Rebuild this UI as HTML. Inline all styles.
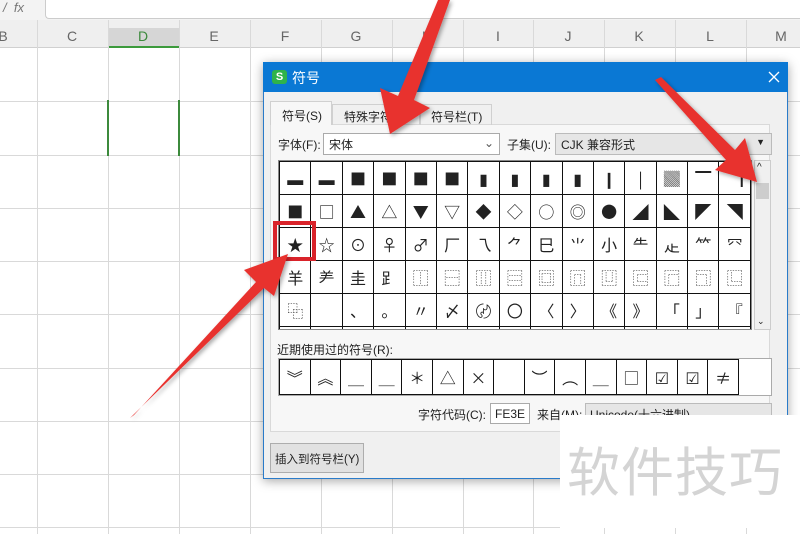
<!DOCTYPE html>
<html><head><meta charset="utf-8"><style>
*{margin:0;padding:0;box-sizing:border-box}
body{width:800px;height:534px;overflow:hidden;background:#fff;position:relative;font-family:"Liberation Sans","Noto Sans CJK SC",sans-serif;font-size:12px;color:#222}
.a{position:absolute}
.vl{position:absolute;top:20px;bottom:0;width:1px;background:#d9d9d9}
.hl{position:absolute;left:0;right:0;height:1px;background:#d9d9d9}
.ch{position:absolute;top:28px;width:20px;text-align:center;font-size:14px;color:#666}
.grid{position:absolute;left:278px;top:160px;width:474px;height:170px;overflow:hidden;background:#fff;border:1px solid #888}
.grid table,.rec table{border-collapse:collapse}
.grid td{width:31.6px;height:33px;border:1.5px solid #111;text-align:center;font-size:16px;font-family:"Noto Sans CJK SC",sans-serif;line-height:1;padding:0}
.rec td{width:30.6px;height:35px;border:1.5px solid #111;text-align:center;font-size:16px;font-family:"Noto Sans CJK SC",sans-serif;padding:0}
</style></head><body>
<div class="a" style="left:0;top:0;width:800px;height:20px;background:#f3f3f3"></div>
<div class="a" style="left:45px;top:0;width:755px;height:19px;background:#fff;border-bottom:1px solid #ccc;border-left:1px solid #ccc;border-radius:0 0 0 4px"></div>
<div class="a" style="left:3px;top:0;font-size:13px;color:#777;font-style:italic">/ &nbsp;fx</div>
<div class="a" style="left:0;top:20px;width:800px;height:28px;background:#efefef;border-bottom:1px solid #d0d0d0"></div>
<div class="a" style="left:108px;top:28px;width:71px;height:20px;background:#d6d6d6;border-bottom:2px solid #3c9a3c"></div>
<div class="ch" style="left:-7px">B</div><div class="ch" style="left:62px">C</div><div class="ch" style="left:133px;color:#3c8a3c">D</div><div class="ch" style="left:204px">E</div><div class="ch" style="left:275px">F</div><div class="ch" style="left:346px">G</div><div class="ch" style="left:417px">H</div><div class="ch" style="left:488px">I</div><div class="ch" style="left:558px">J</div><div class="ch" style="left:629px">K</div><div class="ch" style="left:700px">L</div><div class="ch" style="left:771px">M</div>
<div class="vl" style="left:37px"></div><div class="vl" style="left:108px"></div><div class="vl" style="left:179px"></div><div class="vl" style="left:250px"></div><div class="vl" style="left:321px"></div><div class="vl" style="left:392px"></div><div class="vl" style="left:463px"></div><div class="vl" style="left:533px"></div><div class="vl" style="left:604px"></div><div class="vl" style="left:675px"></div><div class="vl" style="left:746px"></div>
<div class="hl" style="top:101px"></div><div class="hl" style="top:155px"></div><div class="hl" style="top:208px"></div><div class="hl" style="top:261px"></div><div class="hl" style="top:314px"></div><div class="hl" style="top:368px"></div><div class="hl" style="top:421px"></div><div class="hl" style="top:474px"></div><div class="hl" style="top:527px"></div>
<div class="a" style="left:107px;top:100px;width:2px;height:56px;background:#3c8a3c"></div>
<div class="a" style="left:178px;top:100px;width:2px;height:56px;background:#3c8a3c"></div>

<div class="a" style="left:263px;top:62px;width:525px;height:417px;background:#f0f0f0;border:1px solid #2a7bc9;box-shadow:0 2px 10px rgba(0,0,0,.35)"></div>
<div class="a" style="left:263px;top:62px;width:525px;height:30px;background:#0a78d4"></div>
<div class="a" style="left:272px;top:70px;width:15px;height:14px;background:#2fb34a;border-radius:3px;color:#fff;font-size:11px;font-weight:bold;text-align:center;line-height:14px">S</div>
<div class="a" style="left:292px;top:68px;color:#fff;font-size:14px">符号</div>
<svg class="a" style="left:768px;top:71px" width="12" height="12"><path d="M1 1L11 11M11 1L1 11" stroke="#fff" stroke-width="1.3"/></svg>
<div class="a" style="left:270px;top:124px;width:500px;height:308px;border:1px solid #d9d9d9;background:#f7f7f7"></div>
<div class="a" style="left:270px;top:101px;width:62px;height:24px;background:#f7f7f7;border:1px solid #d0d0d0;border-bottom:none;padding:5px 0 0 11px">符号(S)</div>
<div class="a" style="left:332px;top:104px;width:88px;height:21px;border:1px solid #d0d0d0;border-bottom:none;padding:3px 0 0 11px">特殊字符(P)</div>
<div class="a" style="left:420px;top:104px;width:72px;height:21px;border:1px solid #d0d0d0;border-bottom:none;padding:3px 0 0 10px">符号栏(T)</div>
<div class="a" style="left:278px;top:136px">字体(F):</div>
<div class="a" style="left:323px;top:133px;width:177px;height:22px;background:#fff;border:1px solid #aaa;padding:2px 0 0 5px">宋体<span style="position:absolute;right:5px;top:2px;color:#555">⌄</span></div>
<div class="a" style="left:507px;top:136px">子集(U):</div>
<div class="a" style="left:555px;top:133px;width:217px;height:22px;background:#e6e6e6;border:1px solid #bbb;padding:2px 0 0 5px">CJK 兼容形式<span style="position:absolute;right:6px;top:3px;font-size:9px">▼</span></div>
<div class="grid"><table>
<tr><td>▬</td><td>▬</td><td>■</td><td>■</td><td>■</td><td>■</td><td>▮</td><td>▮</td><td>▮</td><td>▮</td><td>❙</td><td>|</td><td>▓</td><td>▔</td><td>▕</td></tr>
<tr><td>■</td><td>□</td><td>▲</td><td>△</td><td>▼</td><td>▽</td><td>◆</td><td>◇</td><td>○</td><td>◎</td><td>●</td><td>◢</td><td>◣</td><td>◤</td><td>◥</td></tr>
<tr><td>★</td><td>☆</td><td>⊙</td><td>♀</td><td>♂</td><td>厂</td><td>乁</td><td>⺈</td><td>巳</td><td>⺌</td><td>小</td><td>⺧</td><td>龰</td><td>⺮</td><td>⺳</td></tr>
<tr><td>羊</td><td>⺶</td><td>圭</td><td>⻊</td><td>⿰</td><td>⿱</td><td>⿲</td><td>⿳</td><td>⿴</td><td>⿵</td><td>⿶</td><td>⿷</td><td>⿸</td><td>⿹</td><td>⿺</td></tr>
<tr><td>⿻</td><td></td><td>、</td><td>。</td><td>〃</td><td>〆</td><td>〄</td><td>〇</td><td>〈</td><td>〉</td><td>《</td><td>》</td><td>「</td><td>」</td><td>『</td></tr>
<tr><td></td><td></td><td></td><td></td><td></td><td></td><td></td><td></td><td></td><td></td><td></td><td></td><td></td><td></td><td></td></tr>
</table></div>
<div class="a" style="left:754px;top:160px;width:17px;height:170px;background:#f0f0f0;border:1px solid #ccc"></div>
<div class="a" style="left:757px;top:162px;font-size:10px">^</div>
<div class="a" style="left:756px;top:183px;width:13px;height:16px;background:#cdcdcd"></div>
<div class="a" style="left:757px;top:316px;font-size:9px">⌄</div>
<div class="a" style="left:273px;top:221px;width:43px;height:40px;border:4px solid #d9232a"></div>
<div class="a" style="left:277px;top:341px">近期使用过的符号(R):</div>
<div class="a rec" style="left:278px;top:358px;width:494px;height:38px;background:#fff;border:1px solid #aaa"><table>
<tr><td>︾</td><td>︽</td><td>＿</td><td>＿</td><td>＊</td><td>△</td><td>×</td><td></td><td>︶</td><td>︵</td><td>＿</td><td>□</td><td>☑</td><td>☑</td><td>≠</td></tr></table></div>
<div class="a" style="left:418px;top:406px">字符代码(C):</div>
<div class="a" style="left:490px;top:403px;width:40px;height:21px;background:#fff;border:1px solid #aaa;padding:3px 0 0 4px">FE3E</div>
<div class="a" style="left:537px;top:406px">来自(M):</div>
<div class="a" style="left:585px;top:403px;width:187px;height:21px;background:#e6e6e6;border:1px solid #bbb;padding:2px 0 0 4px">Unicode(十六进制)</div>
<div class="a" style="left:270px;top:443px;width:94px;height:30px;background:#e1e1e1;border:1px solid #adadad;padding:7px 0 0 4px;font-size:11.5px">插入到符号栏(Y)</div>
<div class="a" style="left:560px;top:415px;width:240px;height:113px;background:#fff"></div>
<div class="a" style="left:567px;top:440px;font-size:53px;color:#d4d4d4;font-family:'Noto Sans CJK SC',sans-serif;letter-spacing:1px;line-height:1.1">软件技巧</div>

<svg class="a" style="left:0;top:0" width="800" height="534">
<defs><filter id="s"><feDropShadow dx="2" dy="2" stdDeviation="2" flood-opacity=".35"/></filter></defs>
<g fill="#e8312f" filter="url(#s)">
<polygon points="438,0 450,0 414,100 430,108 390,134 380,88 398,96"/>
<polygon points="655,80 661,77 735,150 745,138 757,182 715,170 726,160"/>
<polygon points="130,418 134,415 256,282 244,270 288,254 274,296 264,288"/>
</g></svg>
</body></html>
